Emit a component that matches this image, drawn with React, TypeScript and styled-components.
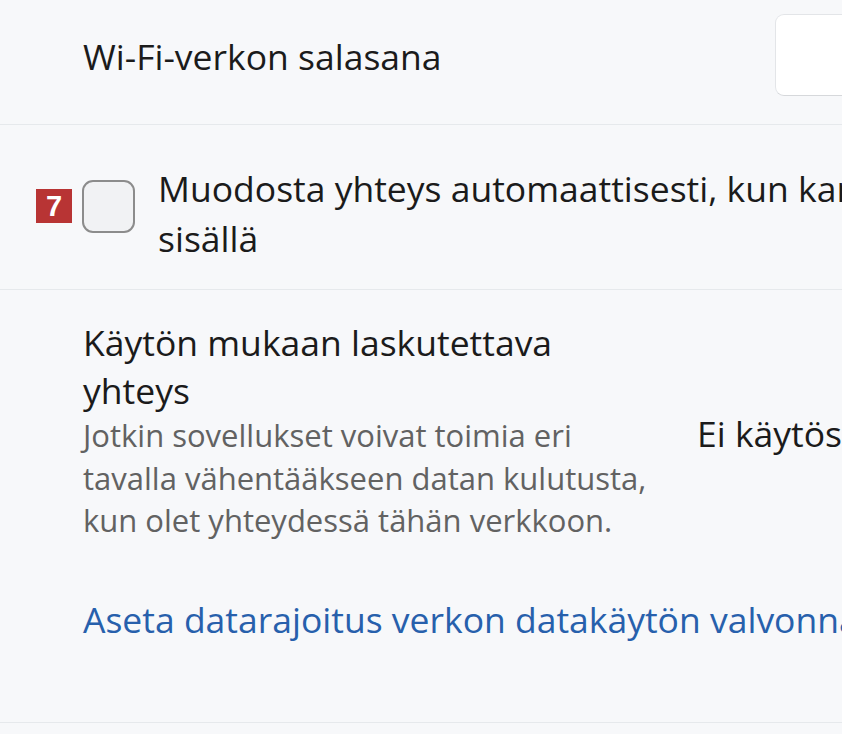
import styled, { createGlobalStyle } from "styled-components";

const GlobalStyle = createGlobalStyle`
  html, body {
    margin: 0;
    padding: 0;
    background: #f7f8fa;
    overflow: hidden;
  }
  body {
    font-family: "Open Sans", "Noto Sans", sans-serif;
    color: #1b1b1b;
  }
`;

export default function App() {
  return (
    <>
      <GlobalStyle />
      <Page>
        <PasswordRow>
          <PasswordLabel>Wi-Fi-verkon salasana</PasswordLabel>
          <PasswordInput />
        </PasswordRow>
        <CheckRow>
          <CheckWrap>
            <Badge>7</Badge>
            <Checkbox />
          </CheckWrap>
          <CheckText>
            Muodosta yhteys automaattisesti, kun kantaman
            <br />
            sisällä
          </CheckText>
        </CheckRow>
        <MeteredRow>
          <MeteredTop>
            <MeteredInfo>
              <Label>
                Käytön mukaan laskutettava
                <br />
                yhteys
              </Label>
              <Description>
                Jotkin sovellukset voivat toimia eri
                <br />
                tavalla vähentääkseen datan kulutusta,
                <br />
                kun olet yhteydessä tähän verkkoon.
              </Description>
            </MeteredInfo>
            <ToggleState>Ei käytössä</ToggleState>
          </MeteredTop>
          <DataLink href="#">Aseta datarajoitus verkon datakäytön valvonnassa</DataLink>
        </MeteredRow>
      </Page>
    </>
  );
}

const Page = styled.div`
  width: 842px;
  height: 734px;
  overflow: hidden;
  display: flex;
  flex-direction: column;
`;

const Row = styled.div`
  width: 1400px;
  flex-shrink: 0;
  border-bottom: 1px solid #e6e9ec;
  box-sizing: border-box;
`;

const Label = styled.div`
  font-size: 35.5px;
  line-height: 47.5px;
  color: #1b1b1b;
  white-space: nowrap;
`;

const PasswordRow = styled(Row)`
  height: 125px;
  display: flex;
  align-items: flex-start;
  padding-left: 83px;
`;

const PasswordLabel = styled(Label)`
  width: 692px;
  margin-top: 33px;
`;

const PasswordInput = styled.div`
  width: 300px;
  height: 82px;
  margin-top: 14px;
  background: #fff;
  border: 1px solid #e3e5e8;
  border-bottom-color: #d6d8db;
  border-radius: 9px;
  box-sizing: border-box;
`;

const CheckRow = styled(Row)`
  height: 165px;
  display: flex;
  align-items: flex-start;
  padding: 38px 0 0 82px;
  gap: 23px;
`;

const CheckWrap = styled.div`
  position: relative;
  margin-top: 17px;
`;

const Checkbox = styled.div`
  width: 53px;
  height: 53px;
  box-sizing: border-box;
  border: 2px solid #8c8c8c;
  border-radius: 11px;
  background: #f1f2f4;
`;

const Badge = styled.div`
  position: absolute;
  left: -46px;
  top: 9px;
  width: 36px;
  height: 34px;
  background: #b83434;
  color: #fff;
  font-family: "Liberation Sans", Arial, sans-serif;
  font-weight: 700;
  font-size: 29px;
  line-height: 34px;
  text-align: center;
`;

const CheckText = styled.div`
  font-size: 35.5px;
  line-height: 50px;
  white-space: nowrap;
`;

const MeteredRow = styled(Row)`
  height: 433px;
  padding: 29px 0 0 83px;
  display: flex;
  flex-direction: column;
`;

const MeteredTop = styled.div`
  display: flex;
  align-items: center;
`;

const MeteredInfo = styled.div`
  width: 565px;
  flex-shrink: 0;
`;

const Description = styled.div`
  font-size: 31px;
  line-height: 42.5px;
  color: #626262;
  white-space: nowrap;
`;

const ToggleState = styled.div`
  margin: 6px 0 0 49px;
  font-size: 35.5px;
  line-height: 47px;
  white-space: nowrap;
`;

const DataLink = styled.a`
  margin-top: 54px;
  font-size: 35.5px;
  line-height: 47px;
  color: #2760ac;
  text-decoration: none;
  white-space: nowrap;
`;
